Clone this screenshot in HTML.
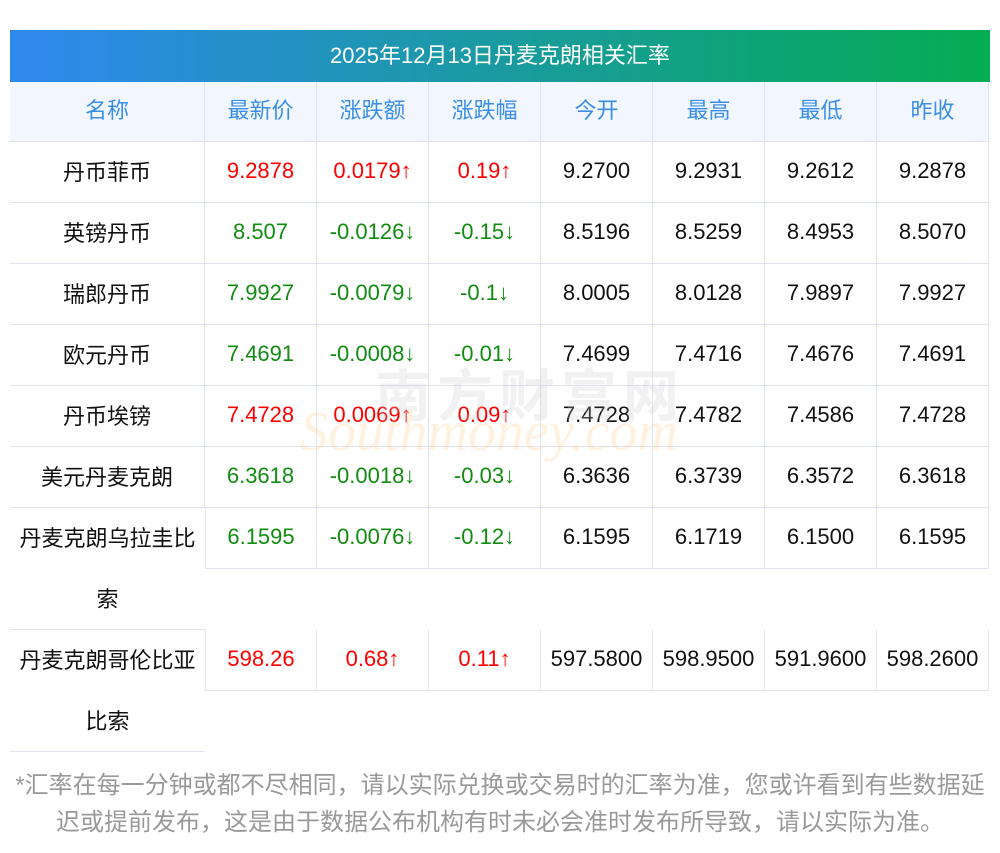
<!DOCTYPE html>
<html><head><meta charset="utf-8"><style>
body{margin:0;width:1000px;height:853px;background:#fff;font-family:"Liberation Sans","Noto Sans CJK SC",sans-serif;position:relative;overflow:hidden}
.bar{position:absolute;left:10px;top:30px;width:980px;height:52px;background:linear-gradient(90deg,#2f88ef,#04ad52);color:#fff;font-size:22px;line-height:52px;text-align:center}
.c{position:absolute;box-sizing:border-box;text-align:center;font-size:22px;border-right:1px solid #dfe3ee;border-bottom:1px solid #dfe3ee;color:#111;white-space:nowrap}
.h{background:#f1f6ff;color:#3a8ee6;height:60px;line-height:58px;top:82px}
.r{color:#f00}.g{color:#118c11}
.ft{position:absolute;left:0;width:1000px;text-align:center;color:#999;font-size:24px;line-height:37px;top:767px;white-space:nowrap}
.wm{position:absolute;left:375px;top:352px;font-size:56px;color:rgba(200,200,200,0.25);letter-spacing:6px;font-weight:bold}
.wm2{position:absolute;left:300px;top:400px;font-size:56px;color:rgba(253,210,150,0.3);font-style:italic;font-family:"Liberation Serif",serif}
</style></head><body>
<div class="bar">2025年12月13日丹麦克朗相关汇率</div>
<div id="t"></div>
<div class="wm">南方财富网</div><div class="wm2">Southmoney.com</div>
<div class="ft">*汇率在每一分钟或都不尽相同，请以实际兑换或交易时的汇率为准，您或许看到有些数据延<br>迟或提前发布，这是由于数据公布机构有时未必会准时发布所导致，请以实际为准。</div>
<script>
var X=[10,205,317,429,541,653,765,877,989];
var H=["名称","最新价","涨跌额","涨跌幅","今开","最高","最低","昨收"];
var s="";
for(var i=0;i<8;i++)s+='<div class="c h" style="left:'+X[i]+'px;width:'+(X[i+1]-X[i])+'px">'+H[i]+'</div>';
var R=[["丹币菲币","9.2878","0.0179↑","0.19↑","9.2700","9.2931","9.2612","9.2878",1,1],
["英镑丹币","8.507","-0.0126↓","-0.15↓","8.5196","8.5259","8.4953","8.5070",0,1],
["瑞郎丹币","7.9927","-0.0079↓","-0.1↓","8.0005","8.0128","7.9897","7.9927",0,1],
["欧元丹币","7.4691","-0.0008↓","-0.01↓","7.4699","7.4716","7.4676","7.4691",0,1],
["丹币埃镑","7.4728","0.0069↑","0.09↑","7.4728","7.4782","7.4586","7.4728",1,1],
["美元丹麦克朗","6.3618","-0.0018↓","-0.03↓","6.3636","6.3739","6.3572","6.3618",0,1],
["丹麦克朗乌拉圭比<br>索","6.1595","-0.0076↓","-0.12↓","6.1595","6.1719","6.1500","6.1595",0,2],
["丹麦克朗哥伦比亚<br>比索","598.26","0.68↑","0.11↑","597.5800","598.9500","591.9600","598.2600",1,2]];
var y=142;
R.forEach(function(r){
 var n=r[9];
 s+='<div class="c" style="left:10px;top:'+y+'px;width:195px;height:'+(61*n)+'px;line-height:61px;'+(n==2?'border-right:none;':'')+'">'+r[0]+'</div>';
 for(var i=1;i<8;i++){
  var cl=i<4?(r[8]?"r":"g"):"";
  s+='<div class="c '+cl+'" style="left:'+X[i]+'px;top:'+y+'px;width:'+(X[i+1]-X[i])+'px;height:61px;line-height:58px;'+(i==1&&n==2?'border-left:1px solid #dfe3ee;':'')+'">'+r[i]+'</div>';
 }
 y+=61*n;
});
document.getElementById("t").innerHTML=s;
</script>
</body></html>
